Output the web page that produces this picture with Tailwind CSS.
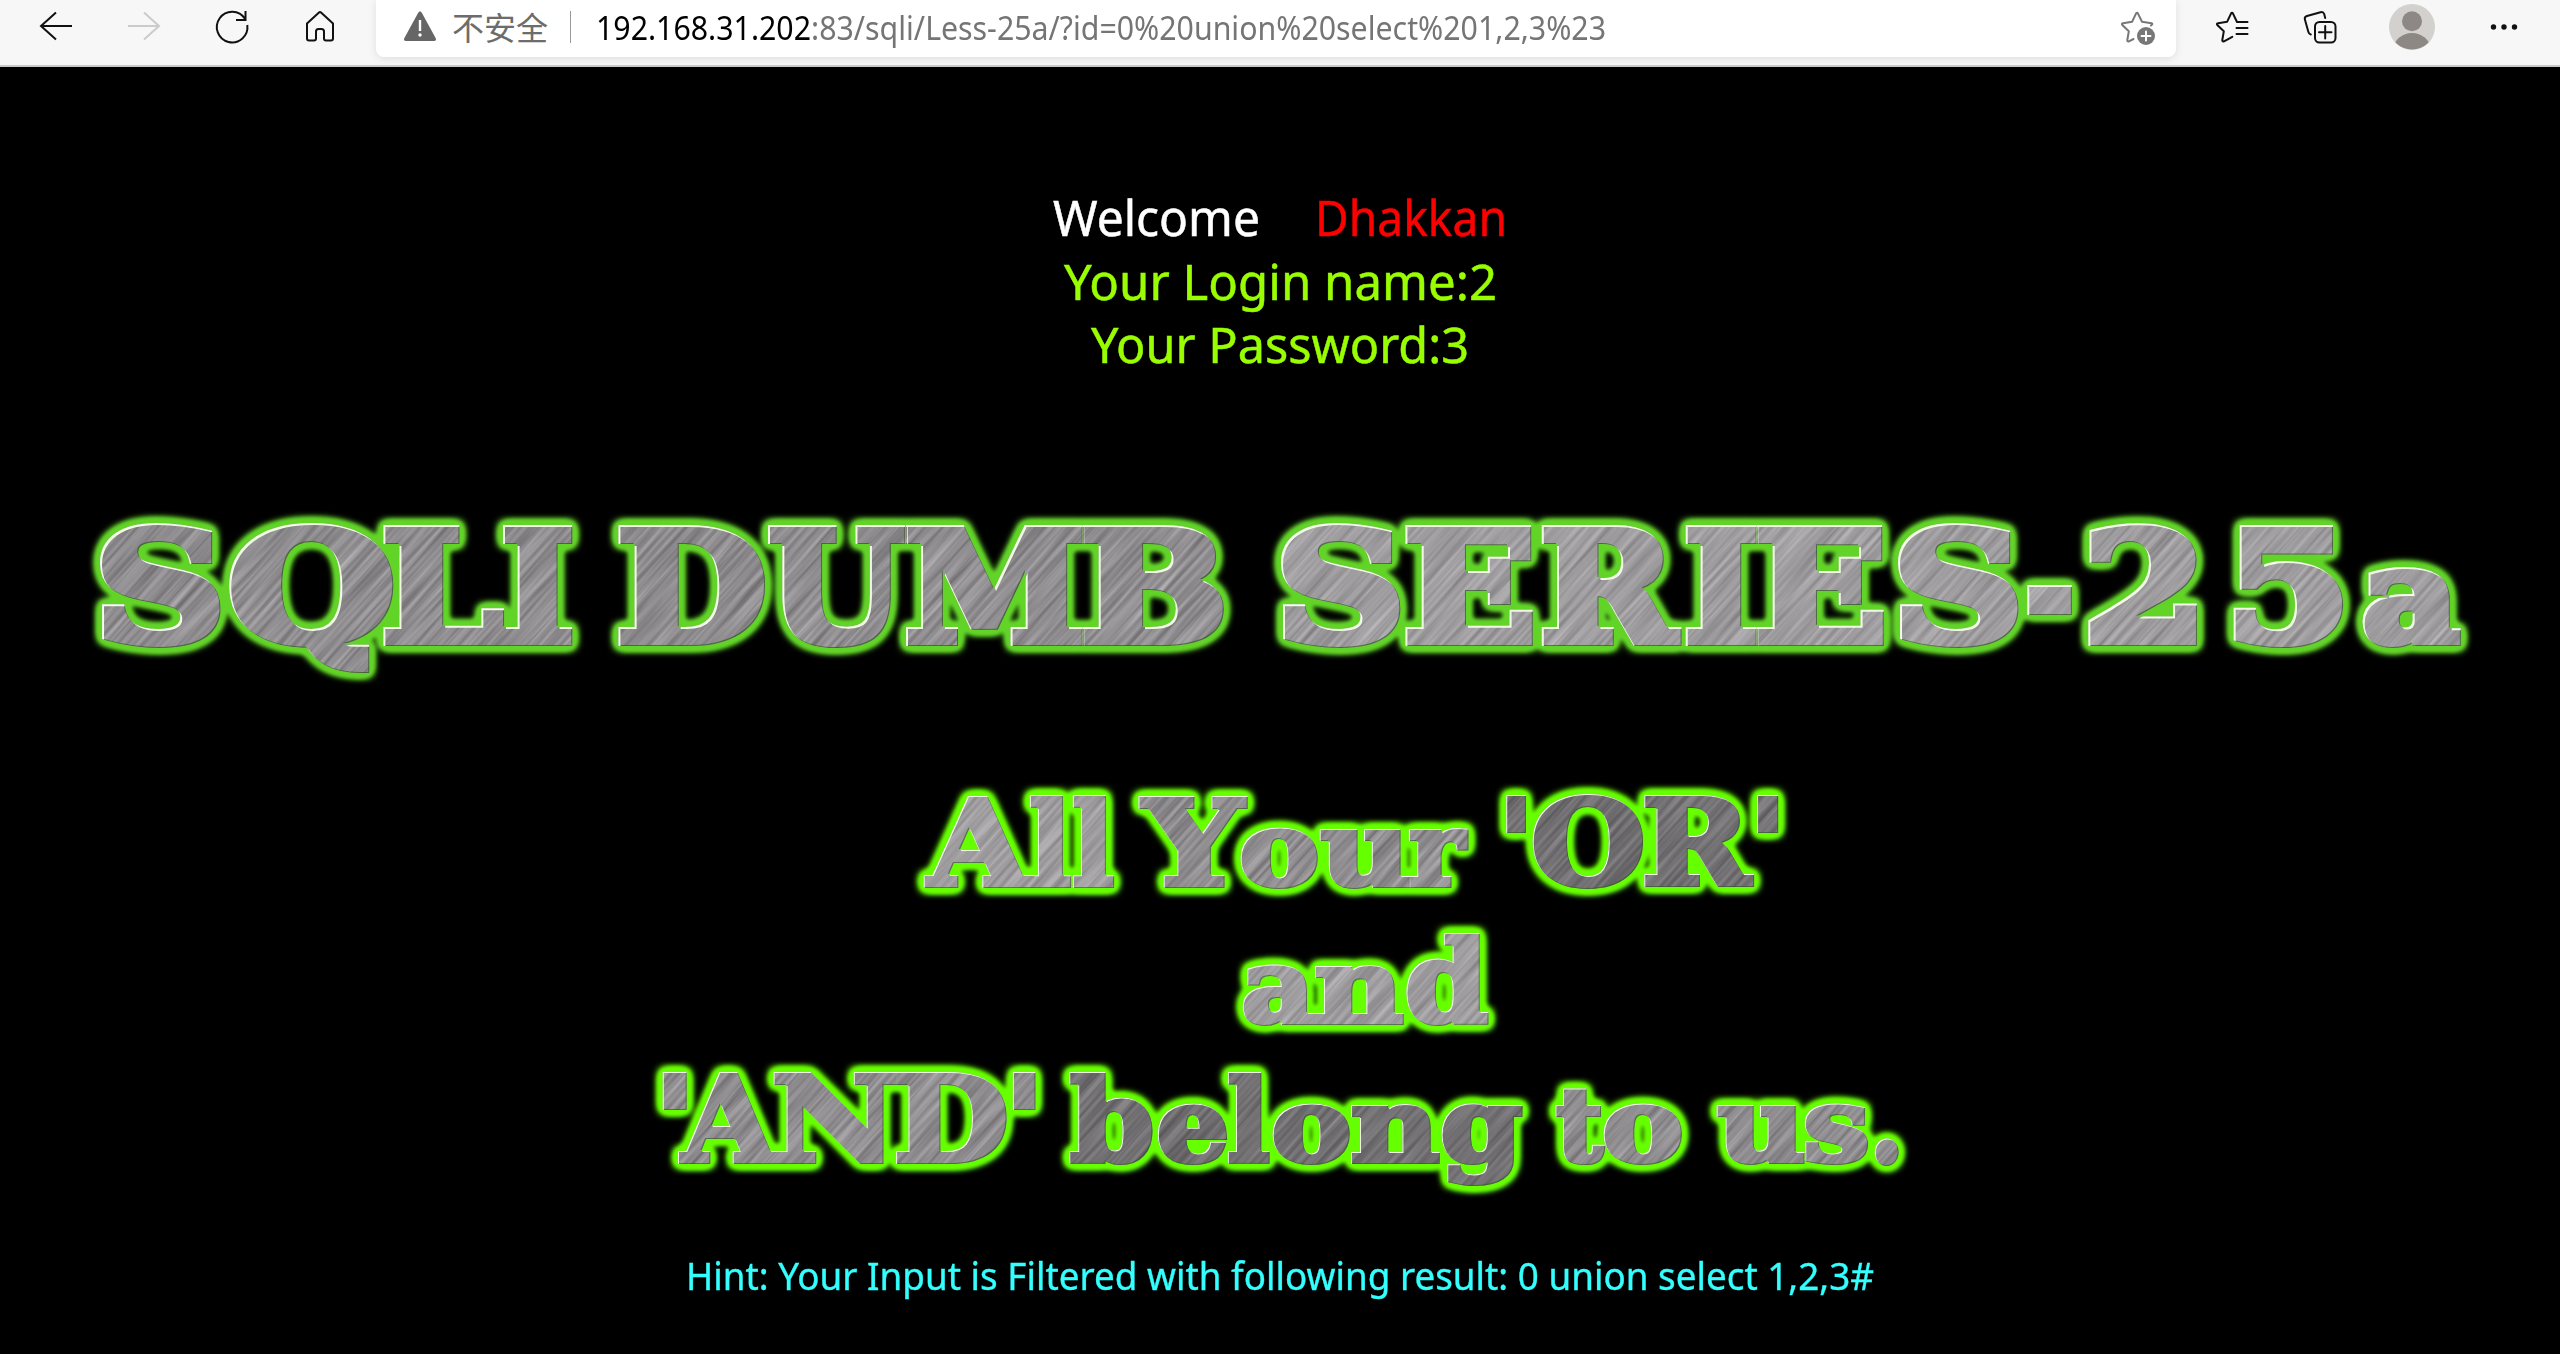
<!DOCTYPE html>
<html lang="zh-CN">
<head>
<meta charset="utf-8">
<title>Less-25a</title>
<script src="https://cdn.jsdelivr.net/npm/@tailwindcss/browser@4"></script>
</head>
<body class="w-[2560px] h-[1354px] overflow-hidden bg-black font-['Noto_Sans','Noto_Sans_CJK_SC',sans-serif]">
<header class="flex h-[67px] overflow-hidden border-b-2 border-[#c9c9c9] bg-[#f7f7f7] pl-3">
  <!-- back -->
  <svg class="h-[65px] w-[88px] shrink-0" viewBox="0 0 88 65" fill="none" stroke="#111" stroke-width="2"><path d="M60 26H29M44 12.5 29 26 44 39.5"/></svg>
  <!-- forward -->
  <svg class="h-[65px] w-[88px] shrink-0" viewBox="0 0 88 65" fill="none" stroke="#cbcbcb" stroke-width="2"><path d="M28 26H59M44 12.5 59 26 44 39.5"/></svg>
  <!-- reload -->
  <svg class="h-[65px] w-[88px] shrink-0" viewBox="0 0 88 65" fill="none" stroke="#111" stroke-width="2"><path d="M59.3 25A15.3 15.3 0 1 1 57 18.8M57.5 11V20H48"/></svg>
  <!-- home -->
  <svg class="h-[65px] w-[88px] shrink-0" viewBox="0 0 88 65" fill="none" stroke="#111" stroke-width="2" stroke-linejoin="round"><path d="M31 23.5 43 12.6Q44 11.7 45 12.6L57 23.5V38.5Q57 40.5 55 40.5H50Q48 40.5 48 38.5V31.5Q48 29 45.5 29H42.5Q40 29 40 31.5V38.5Q40 40.5 38 40.5H33Q31 40.5 31 38.5Z"/></svg>
  <!-- address bar -->
  <div class="ml-3 flex h-[57px] w-[1800px] shrink-0 items-start rounded-b-lg bg-white pl-7 shadow-[0_2px_8px_rgba(0,0,0,0.10)]">
    <svg class="mt-[11px] h-8 w-8 shrink-0" viewBox="0 0 32 32"><path d="M14.2 1.8Q16-1.2 17.8 1.8L31.6 27Q32.8 30 29.8 30H2.2Q-.8 30 .4 27Z" fill="#666"/><path d="M16 9V20" stroke="#fff" stroke-width="2.4"/><circle cx="16" cy="24" r="1.7" fill="#fff"/></svg>
    <span class="ml-4 w-[96px] font-['Noto_Sans_CJK_SC',sans-serif] text-[32px] leading-[53px] text-[#6c6c6c]">不安全</span>
    <span class="ml-[22px] mt-[11px] h-8 w-px bg-[#999]"></span>
    <div class="ml-[25px] w-[1010px] whitespace-nowrap"><span data-fit="1010" data-px="32" class="inline-block origin-left text-[32px] leading-[55px] text-[#757575]"><span class="text-black">192.168.31.202</span>:83/sqli/Less-25a/?id=0%20union%20select%201,2,3%23</span></div>
    <!-- add to favourites -->
    <svg class="ml-auto mr-[19px] h-[57px] w-[40px] shrink-0" viewBox="2116 0 40 57" fill="none" stroke="#777" stroke-width="2" stroke-linejoin="round" stroke-linecap="round"><path d="M2132.5 39 2128 41.3Q2126 42 2126.3 40L2127.8 31.3 2121.3 25Q2120.2 23.5 2122 23.2L2131.2 21.7 2135 13.6Q2136 12 2137 13.6L2141 21.7 2150.5 23.2Q2152.3 23.5 2150 25.5"/><circle cx="2145" cy="36" r="9" fill="#777" stroke="none"/><path d="M2145 31.5V40.5M2140.5 36H2149.5" stroke="#fff"/></svg>
  </div>
  <div class="flex pl-3">
    <!-- favourites -->
    <svg class="h-[65px] w-[88px] shrink-0" viewBox="2188 0 88 65" fill="none" stroke="#111" stroke-width="2" stroke-linejoin="round" stroke-linecap="round"><path d="M2232.3 36.8 2224 41.3Q2222 42 2222.3 40L2223.8 31.3 2217.3 25Q2216.2 23.5 2218 23.2L2227.2 21.7 2231 13.6Q2232 12 2233 13.6L2237 22H2247.5M2236.5 28H2247.5M2236.5 34H2247.5"/></svg>
    <!-- collections -->
    <svg class="h-[65px] w-[88px] shrink-0" viewBox="2276 0 88 65" fill="none" stroke="#111" stroke-width="2" stroke-linecap="round"><path d="M2310.8 34.5Q2309 34 2308.4 32L2304.9 19.5Q2304.2 16.8 2307 16L2320.5 12.2Q2323.3 11.5 2324.2 14L2325.2 18"/><rect x="2315" y="22" width="20.5" height="20.5" rx="4.5"/><path d="M2325.2 26V38.5M2319 32.2H2331.5"/></svg>
    <!-- profile -->
    <svg class="h-[65px] w-[88px] shrink-0" viewBox="2364 0 88 65"><defs><clipPath id="face"><circle cx="2412" cy="27" r="22.5"/></clipPath></defs><circle cx="2412" cy="27" r="23" fill="#d3d1cd"/><circle cx="2412" cy="21.3" r="10" fill="#8d8884"/><ellipse cx="2412" cy="48" rx="18" ry="15" fill="#8d8884" clip-path="url(#face)"/></svg>
    <!-- more -->
    <svg class="h-[65px] w-[88px] shrink-0" viewBox="2452 0 88 65" fill="#111"><circle cx="2493.5" cy="27" r="2.7"/><circle cx="2504" cy="27" r="2.7"/><circle cx="2514.5" cy="27" r="2.7"/></svg>
  </div>
</header>

<main class="flex flex-col items-center pt-[119px]">
  <div class="flex h-[190px] flex-col items-center text-[49px] leading-[63.5px] whitespace-nowrap text-[#99ff00] [-webkit-text-stroke:0.5px]">
    <div class="flex gap-[55px]">
      <div class="w-[207px] text-white"><span data-fit="207" data-px="49" class="inline-block origin-left">Welcome</span></div>
      <div class="w-[192px] text-[#ff0000]"><span data-fit="192" data-px="49" class="inline-block origin-left">Dhakkan</span></div>
    </div>
    <div class="w-[433px]"><span data-fit="433" data-px="49" class="inline-block origin-left">Your Login name:2</span></div>
    <div class="w-[378px]"><span data-fit="378" data-px="49" class="inline-block origin-left">Your Password:3</span></div>
  </div>

  <svg class="mt-[104px] h-[730px] w-[2560px] shrink-0 font-['DejaVu_Serif',serif] font-bold" viewBox="0 480 2560 730">
    <defs>
      <filter id="grain" x="0" y="0" width="100%" height="100%" color-interpolation-filters="sRGB">
        <feTurbulence type="fractalNoise" baseFrequency="0.008 0.25" numOctaves="3" seed="7"/>
        <feColorMatrix values="0.38 0 0 0 0.37  0.38 0 0 0 0.36  0.38 0 0 0 0.37  0 0 0 0 1"/>
      </filter>
      <pattern id="steel" patternUnits="userSpaceOnUse" width="3000" height="3000" patternTransform="rotate(-48) translate(-1500 -200)"><rect width="3000" height="3000" filter="url(#grain)"/></pattern>
      <pattern id="steelLight" patternUnits="userSpaceOnUse" width="3000" height="3000" patternTransform="rotate(-48) translate(-1500 -200)"><rect width="3000" height="3000" filter="url(#grain)"/><rect width="3000" height="3000" fill="#fff" opacity=".14"/></pattern>
      <pattern id="steelDark" patternUnits="userSpaceOnUse" width="3000" height="3000" patternTransform="rotate(-48) translate(-1500 -200)"><rect width="3000" height="3000" filter="url(#grain)"/><rect width="3000" height="3000" fill="#000" opacity=".2"/></pattern>
      <filter id="glowTitle" filterUnits="userSpaceOnUse" x="0" y="480" width="2560" height="730" color-interpolation-filters="sRGB">
        <feGaussianBlur in="SourceAlpha" stdDeviation="5"/><feComponentTransfer><feFuncA type="linear" slope="9"/></feComponentTransfer><feGaussianBlur stdDeviation="1.6" result="halo"/>
        <feFlood flood-color="#62d428"/><feComposite in2="halo" operator="in" result="glow"/>
        <feOffset in="SourceAlpha" dx="1.6" dy="1.6" result="o1"/><feFlood flood-color="#f2ffe6"/><feComposite in2="SourceAlpha" operator="in"/><feComposite in2="o1" operator="out" result="lit"/>
        <feOffset in="SourceAlpha" dx="-1.5" dy="-1.5" result="o2"/><feFlood flood-color="#2f5520" flood-opacity=".7"/><feComposite in2="SourceAlpha" operator="in"/><feComposite in2="o2" operator="out" result="shade"/>
        <feMerge><feMergeNode in="glow"/><feMergeNode in="SourceGraphic"/><feMergeNode in="shade"/><feMergeNode in="lit"/></feMerge>
      </filter>
      <filter id="glowMotto" filterUnits="userSpaceOnUse" x="0" y="480" width="2560" height="730" color-interpolation-filters="sRGB">
        <feGaussianBlur in="SourceAlpha" stdDeviation="5"/><feComponentTransfer><feFuncA type="linear" slope="9"/></feComponentTransfer><feGaussianBlur stdDeviation="1.8" result="halo"/>
        <feFlood flood-color="#66ff00"/><feComposite in2="halo" operator="in" result="glow"/>
        <feOffset in="SourceAlpha" dx="1.3" dy="1.3" result="o1"/><feFlood flood-color="#f2ffe6"/><feComposite in2="SourceAlpha" operator="in"/><feComposite in2="o1" operator="out" result="lit"/>
        <feOffset in="SourceAlpha" dx="-1.2" dy="-1.2" result="o2"/><feFlood flood-color="#2f5520" flood-opacity=".6"/><feComposite in2="SourceAlpha" operator="in"/><feComposite in2="o2" operator="out" result="shade"/>
        <feMerge><feMergeNode in="glow"/><feMergeNode in="SourceGraphic"/><feMergeNode in="shade"/><feMergeNode in="lit"/></feMerge>
      </filter>
    </defs>
    <!-- data-ink: left,right edge of each glyph, outline included; x-height glyphs use data-small -->
    <g filter="url(#glowTitle)" fill="url(#steel)" stroke="url(#steel)" stroke-width="10">
      <text data-pad="5" data-size="152" data-small="130" data-base="646" data-ink="101,220 230,392 384,504 503,573">SQLI</text>
      <text data-pad="5" data-size="152" data-small="130" data-base="646" data-ink="619,765 768,906 906,1083 1083,1224">DUMB</text>
      <text fill="url(#steelLight)" stroke="url(#steelLight)" data-pad="5" data-size="152" data-small="130" data-base="646" data-ink="1282,1400 1406,1533 1542,1682 1686,1757 1757,1884 1899,2018 2026,2073 2089,2197 2234,2343 2363,2461">SERIES-25a</text>
    </g>
    <g filter="url(#glowMotto)" fill="url(#steel)" stroke="url(#steel)" stroke-width="6">
      <text fill="url(#steelLight)" stroke="url(#steelLight)" data-pad="3" data-size="118" data-small="101" data-base="888" data-ink="924,1033 1029,1072 1072,1115">All</text>
      <text data-pad="3" data-size="118" data-small="101" data-base="888" data-ink="1138,1248 1241,1318 1320,1409 1408,1469">Your</text>
      <text fill="url(#steelDark)" stroke="url(#steelDark)" data-pad="3" data-size="118" data-small="101" data-base="887" data-ink="1506,1526 1532,1643 1644,1754 1757,1778">'OR'</text>
      <text fill="url(#steelLight)" stroke="url(#steelLight)" data-pad="3" data-size="116" data-small="101" data-base="1025" data-ink="1243,1316 1315,1404 1406,1489">and</text>
      <text data-pad="3" data-size="118" data-small="101" data-base="1164" data-ink="663,686 678,780 774,897 896,1007 1013,1035">'AND'</text>
      <text fill="url(#steelDark)" stroke="url(#steelDark)" data-pad="3" data-size="116" data-small="101" data-base="1164" data-ink="1069,1153 1158,1227 1227,1270 1273,1350 1351,1440 1442,1523">belong</text>
      <text data-pad="3" data-size="116" data-small="101" data-base="1164" data-ink="1555,1606 1604,1682">to</text>
      <text data-pad="3" data-size="116" data-small="101" data-base="1164" data-ink="1717,1804 1805,1868 1874,1899">us.</text>
    </g>
  </svg>

  <div class="mt-[35px] w-[1188px] text-[38.5px] leading-[60px] whitespace-nowrap text-[#33ffff] [-webkit-text-stroke:0.4px]"><span data-fit="1188" data-px="38.5" class="inline-block origin-left">Hint: Your Input is Filtered with following result: 0 union select 1,2,3#</span></div>
</main>

<script>
const ctx = document.createElement('canvas').getContext('2d');
// Scale each line of text horizontally to its column width.
document.querySelectorAll('[data-fit]').forEach(el => {
  ctx.font = `${el.dataset.px}px "Noto Sans"`;
  el.style.transform = `scaleX(${el.dataset.fit / ctx.measureText(el.textContent).width})`;
});
// Set each banner glyph so that its ink spans the given left and right edges.
document.querySelectorAll('text[data-ink]').forEach(t => {
  const chars = [...t.textContent];
  const boxes = t.dataset.ink.split(' ').map(s => s.split(',').map(Number));
  const pad = +t.dataset.pad;
  t.textContent = '';
  chars.forEach((c, i) => {
    const tall = 'bdl'.includes(c) ? 0.96 : 1;
    const size = 'aouretngs'.includes(c) ? +t.dataset.small : t.dataset.size * tall;
    ctx.font = `bold ${size}px "DejaVu Serif"`;
    const m = ctx.measureText(c);
    const x0 = boxes[i][0] + pad, x1 = boxes[i][1] - pad;
    const k = (x1 - x0) / (m.actualBoundingBoxRight + m.actualBoundingBoxLeft);
    const s = document.createElementNS('http://www.w3.org/2000/svg', 'tspan');
    s.textContent = c;
    s.setAttribute('x', x0 + m.actualBoundingBoxLeft * k);
    s.setAttribute('y', t.dataset.base - pad);
    s.setAttribute('font-size', size);
    s.setAttribute('textLength', m.width * k);
    s.setAttribute('lengthAdjust', 'spacingAndGlyphs');
    t.appendChild(s);
  });
});
</script>
</body>
</html>
